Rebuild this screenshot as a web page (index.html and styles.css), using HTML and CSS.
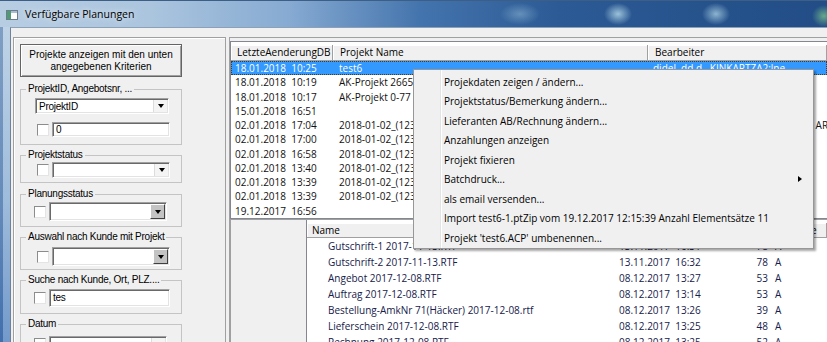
FILE: index.html
```html
<!DOCTYPE html>
<html lang="de">
<head>
    <meta charset="UTF-8">
    <meta name="viewport" content="width=device-width, initial-scale=1.0">
    <title>Verfügbare Planungen</title>
    <link rel="stylesheet" href="styles.css">
</head>
<body>

<div class="window">
    <div class="titlebar">
        <svg class="app-icon" width="12" height="10" viewBox="0 0 12 10">
            <rect x="0.5" y="0.5" width="11" height="9" fill="#fdfdfd" stroke="#6d7c8c"/>
            <rect x="1" y="1" width="4" height="8" fill="#4f9a74"/>
            <rect x="5" y="1" width="6" height="2" fill="#a9bdd2"/>
        </svg>
        <span class="title">Verfügbare Planungen</span>
    </div>

    <div class="frame">
        <div class="client">

            <!-- Suchkriterien -->
            <div class="left">
                <button class="search-btn">Projekte anzeigen mit den unten<br>angegebenen Kriterien</button>

                <fieldset class="group g-id">
                    <legend>ProjektID, Angebotsnr, ...</legend>
                    <div class="combo id-combo"><span class="combo-text">ProjektID</span><span class="drop"></span></div>
                    <div class="row id-row"><span class="chk"></span><span class="edit id-edit">0</span></div>
                </fieldset>

                <fieldset class="group g-status">
                    <legend>Projektstatus</legend>
                    <div class="row"><span class="chk"></span><div class="combo"><span class="combo-text"></span><span class="drop"></span></div></div>
                </fieldset>

                <fieldset class="group g-plan">
                    <legend>Planungsstatus</legend>
                    <div class="row shift"><span class="chk"></span><div class="combo tall"><span class="combo-text"></span><span class="drop raised"></span></div></div>
                </fieldset>

                <fieldset class="group g-kunde">
                    <legend>Auswahl nach Kunde mit Projekt</legend>
                    <div class="row"><span class="chk"></span><div class="combo tall"><span class="combo-text"></span><span class="drop raised"></span></div></div>
                </fieldset>

                <fieldset class="group g-suche">
                    <legend>Suche nach Kunde, Ort, PLZ....</legend>
                    <div class="row shift"><span class="chk"></span><span class="edit search-edit">tes</span></div>
                </fieldset>

                <fieldset class="group g-datum">
                    <legend>Datum</legend>
                    <div class="row shift"><span class="chk"></span><div class="combo"><span class="combo-text"></span><span class="drop"></span></div></div>
                </fieldset>
            </div>

            <div class="right">
                <!-- Projektliste -->
                <div class="top-list">
                    <div class="cols head">
                        <div class="hcell">LetzteAenderungDB</div>
                        <div class="hcell">Projekt Name</div>
                        <div class="hcell">Bearbeiter</div>
                    </div>
                    <div class="cols prow selected"><span>18.01.2018  10:25</span><span>test6</span><span>didel, dd d., KINKARTZA2;lne</span></div>
                    <div class="cols prow"><span>18.01.2018  10:19</span><span>AK-Projekt 2665</span><span></span></div>
                    <div class="cols prow"><span>18.01.2018  10:17</span><span>AK-Projekt 0-77</span><span></span></div>
                    <div class="cols prow"><span>15.01.2018  16:51</span><span></span><span></span></div>
                    <div class="cols prow"><span>02.01.2018  17:04</span><span>2018-01-02_(1234)</span><span>didel, dd d., KINKARTZA2;lne, test,  ARCHIV</span></div>
                    <div class="cols prow"><span>02.01.2018  17:00</span><span>2018-01-02_(1234)</span><span></span></div>
                    <div class="cols prow"><span>02.01.2018  16:58</span><span>2018-01-02_(1234)</span><span></span></div>
                    <div class="cols prow"><span>02.01.2018  13:40</span><span>2018-01-02_(1234)</span><span></span></div>
                    <div class="cols prow"><span>02.01.2018  13:39</span><span>2018-01-02_(1234)</span><span></span></div>
                    <div class="cols prow"><span>02.01.2018  13:39</span><span>2018-01-02_(1234)</span><span></span></div>
                    <div class="cols prow"><span>19.12.2017  16:56</span><span></span><span></span></div>
                </div>

                <div class="lower">
                    <div class="tree"></div>
                    <!-- Dokumente zum Projekt -->
                    <div class="files">
                        <div class="fcols head">
                            <div class="hcell">Name</div>
                            <div class="hcell">Geändert</div>
                            <div class="hcell num">Größe</div>
                            <div class="hcell">Attribute</div>
                        </div>
                        <div class="fcols frow"><span>Gutschrift-1 2017-11-13.RTF</span><span>13.11.2017  16:31</span><span class="num">78</span><span>A</span></div>
                        <div class="fcols frow"><span>Gutschrift-2 2017-11-13.RTF</span><span>13.11.2017  16:32</span><span class="num">78</span><span>A</span></div>
                        <div class="fcols frow"><span>Angebot 2017-12-08.RTF</span><span>08.12.2017  13:27</span><span class="num">53</span><span>A</span></div>
                        <div class="fcols frow"><span>Auftrag 2017-12-08.RTF</span><span>08.12.2017  13:14</span><span class="num">53</span><span>A</span></div>
                        <div class="fcols frow"><span>Bestellung-AmkNr 71(Häcker) 2017-12-08.rtf</span><span>08.12.2017  13:26</span><span class="num">39</span><span>A</span></div>
                        <div class="fcols frow"><span>Lieferschein 2017-12-08.RTF</span><span>08.12.2017  13:25</span><span class="num">48</span><span>A</span></div>
                        <div class="fcols frow"><span>Rechnung 2017-12-08.RTF</span><span>08.12.2017  13:25</span><span class="num">52</span><span>A</span></div>
                    </div>
                </div>
            </div>

        </div>
    </div>

    <!-- Kontextmenü -->
    <div class="menu">
        <div class="menu-item">Projekdaten zeigen / ändern...</div>
        <div class="menu-item">Projektstatus/Bemerkung ändern...</div>
        <div class="menu-item">Lieferanten AB/Rechnung ändern...</div>
        <div class="menu-item">Anzahlungen anzeigen</div>
        <div class="menu-item">Projekt fixieren</div>
        <div class="menu-item">Batchdruck...<span class="sub-arrow"></span></div>
        <div class="menu-item">als email versenden...</div>
        <div class="menu-item">Import test6-1.ptZip vom 19.12.2017 12:15:39 Anzahl Elementsätze 11</div>
        <div class="menu-item">Projekt 'test6.ACP' umbenennen...</div>
    </div>
</div>

</body>
</html>
```

FILE: styles.css
```css
body {
    margin: 0;
    background: #f0f0f0;
    font-family: "Open Sans", "Noto Sans", sans-serif;
    font-size: 10px;
    color: #000;
}

.window {
    position: relative;
    width: 827px;
    height: 342px;
    overflow: hidden;
}

/* Aero title bar */
.titlebar {
    height: 27px;
    box-sizing: border-box;
    display: flex;
    align-items: center;
    padding-left: 6px;
    border-top: 1px solid #3d5f86;
    background:
        radial-gradient(ellipse 14px 11px at 618px 13px, rgba(175, 212, 230, 0.85), transparent),
        radial-gradient(ellipse 14px 11px at 716px 13px, rgba(175, 212, 230, 0.75), transparent),
        radial-gradient(ellipse 12px 11px at 824px 15px, rgba(120, 190, 140, 0.8), transparent),
        radial-gradient(ellipse 20px 11px at 520px 13px, rgba(160, 200, 225, 0.45), transparent),
        linear-gradient(to right, #b7cde2 0, #abc5de 150px, #86aad2 290px, #4474ad 420px, #2c5a94 560px, #224d86 827px);
}

.app-icon {
    display: block;
    margin-top: 1px;
}

.title {
    margin-left: 7px;
    font-size: 10.5px;
    color: #000;
    text-shadow: 0 0 6px rgba(255, 255, 255, 0.9);
}

.frame {
    display: flex;
    height: 315px;
    box-sizing: border-box;
    padding-left: 10px;
    background:
        linear-gradient(to right, rgba(40, 80, 140, 0.35) 0, rgba(40, 80, 140, 0.35) 3px, rgba(255, 255, 255, 0.2) 3px),
        linear-gradient(to bottom, #afc8e0 0, #86abd3 55%, #4f80bd 100%);
}

.client {
    flex: 1;
    min-width: 0;
    display: flex;
    align-items: flex-start;
    background: #f0f0f0;
    border-left: 1px solid #6f8296;
    border-top: 1px solid #8da1b6;
    padding: 9px 0 0 2px;
    overflow: hidden;
}

/* left search panel */
.left {
    flex: none;
    width: 213px;
    height: 330px;
    box-sizing: border-box;
    border: 1px solid #a0a0a0;
    box-shadow: inset 1px 1px #fff;
    padding: 6px 0 0 6px;
    font-family: "Liberation Sans", Arial, sans-serif;
    font-size: 10px;
    letter-spacing: -0.25px;
}

.search-btn {
    display: block;
    width: 162px;
    height: 33px;
    margin: 0;
    padding: 0;
    font: inherit;
    line-height: 12px;
    color: #000;
    background: #f0f0f0;
    border: 1px solid #646464;
    box-shadow: inset 1px 1px #fff, inset -1px -1px #a0a0a0;
}

.group {
    width: 162px;
    box-sizing: border-box;
    min-width: 0;
    margin: 4px 0 0;
    padding: 0 0 5px;
    border: 1px solid #c4c4c4;
}

.group legend {
    margin-left: 5px;
    padding: 0 2px;
    line-height: 12px;
}

.g-id { margin-top: 6px; padding: 3px 0 7px; }
.g-status { padding: 1px 0 4px; }
.g-plan { margin-top: 5px; padding: 2px 0 5px; }
.g-kunde { padding: 4px 0 3px; }
.g-suche { padding: 3px 0 6px; }
.g-datum { padding-top: 6px; }

.row {
    display: flex;
    align-items: center;
    margin-left: 16px;
}

.row.shift {
    margin-left: 13px;
}

.id-row {
    margin-top: 8px;
}

.chk {
    flex: none;
    width: 10px;
    height: 10px;
    margin-right: 3px;
    background: #fff;
    border: 1px solid;
    border-color: #8c8c8c #e4e4e4 #e4e4e4 #8c8c8c;
}

.combo,
.edit {
    box-sizing: border-box;
    background: #fff;
    border: 1px solid;
    border-color: #a0a0a0 #fff #fff #a0a0a0;
    box-shadow: inset 1px 1px #696969, inset -1px -1px #e3e3e3;
}

.combo {
    display: flex;
    width: 118px;
    height: 16px;
}

.combo.tall {
    height: 19px;
}

.id-combo {
    width: 134px;
    margin-left: 14px;
}

.combo-text {
    flex: 1;
    padding: 1px 0 0 3px;
    line-height: 13px;
}

.drop {
    flex: none;
    width: 13px;
    margin: 1px;
    background: #f4f4f4;
    border-left: 1px solid #dcdcdc;
    display: flex;
    align-items: center;
    justify-content: center;
}

.drop::after {
    content: "";
    border-style: solid;
    border-width: 4px 3.5px 0;
    border-color: #000 transparent transparent;
}

.drop.raised {
    width: 15px;
    margin: 1px;
    box-sizing: border-box;
    background: #c3c3c3;
    border: 1px solid;
    border-color: #fff #404040 #404040 #fff;
}

.edit {
    display: block;
    width: 118px;
    height: 15px;
    padding-left: 3px;
    line-height: 13px;
}

.search-edit {
    width: 121px;
    height: 18px;
    line-height: 15px;
}

/* right side */
.right {
    flex: 1;
    min-width: 0;
    height: 320px;
    margin-left: 3px;
    display: flex;
    flex-direction: column;
    border-top: 1px solid #a0a0a0;
    border-left: 1px solid #a0a0a0;
    padding-top: 3px;
}

.top-list {
    flex: none;
    background: #fff;
    border: 1px solid #828790;
    border-right: 0;
    padding-top: 3px;
}

.cols {
    display: grid;
    grid-template-columns: 102px 315px 1fr;
    white-space: pre;
}

.head {
    background: #f0f0f0;
    border-bottom: 1px solid #a0a0a0;
}

.hcell {
    height: 15px;
    line-height: 15px;
    padding-left: 6px;
    border-right: 1px solid #a0a0a0;
    box-shadow: inset 1px 1px #fff;
    overflow: hidden;
}

.head .hcell:nth-child(2),
.head .hcell:nth-child(3) {
    padding-left: 7px;
}

.prow {
    height: 14.25px;
    line-height: 14.25px;
    color: #111;
}

.prow span {
    overflow: hidden;
    padding-left: 6px;
}

.prow span:first-child {
    padding-left: 4px;
}

.prow span:last-child {
    padding-left: 5px;
}

.prow.selected {
    background: #3399ff;
    color: #fff;
    outline: 1px dotted #4a3a20;
    outline-offset: -1px;
}

.lower {
    flex: 1;
    display: flex;
    border-top: 1px solid #a0a0a0;
}

.tree {
    flex: none;
    width: 76px;
    box-sizing: border-box;
    border-left: 1px solid #a0a0a0;
    background: #f0f0f0;
}

.files {
    flex: 1;
    min-width: 0;
    background: #fff;
    border-left: 1px solid #828790;
    padding-top: 3px;
}

.fcols {
    display: grid;
    grid-template-columns: 305px 123px 35px 1fr;
    white-space: pre;
}

.files .head .hcell {
    height: 14px;
    line-height: 14px;
    padding-left: 5px;
}

.files .head .hcell.num {
    padding: 0 2px 0 0;
    text-align: right;
}

.frow {
    height: 16px;
    line-height: 16px;
    color: #16204a;
}

.frow span {
    overflow: hidden;
}

.frow span:nth-child(1) { padding-left: 21px; }
.frow span:nth-child(2) { padding-left: 7px; }
.frow span.num { text-align: right; padding-right: 2px; }
.frow span:nth-child(4) { padding-left: 5px; }

/* context menu */
.menu {
    position: absolute;
    left: 413px;
    top: 69px;
    width: 401px;
    height: 180px;
    box-sizing: border-box;
    padding-top: 2px;
    border: 1px solid #979797;
    background: linear-gradient(to right, #f0f0f0 26px, #e2e3e3 26px, #e2e3e3 27px, #fff 27px, #fff 28px, #f0f0f0 28px);
    box-shadow: 2px 2px 2px rgba(0, 0, 0, 0.35);
}

.menu-item {
    display: flex;
    align-items: center;
    height: 19.5px;
    padding: 0 11px 0 30px;
    white-space: nowrap;
}

.sub-arrow {
    margin-left: auto;
    border-style: solid;
    border-width: 3.5px 0 3.5px 4px;
    border-color: transparent transparent transparent #000;
}
```
